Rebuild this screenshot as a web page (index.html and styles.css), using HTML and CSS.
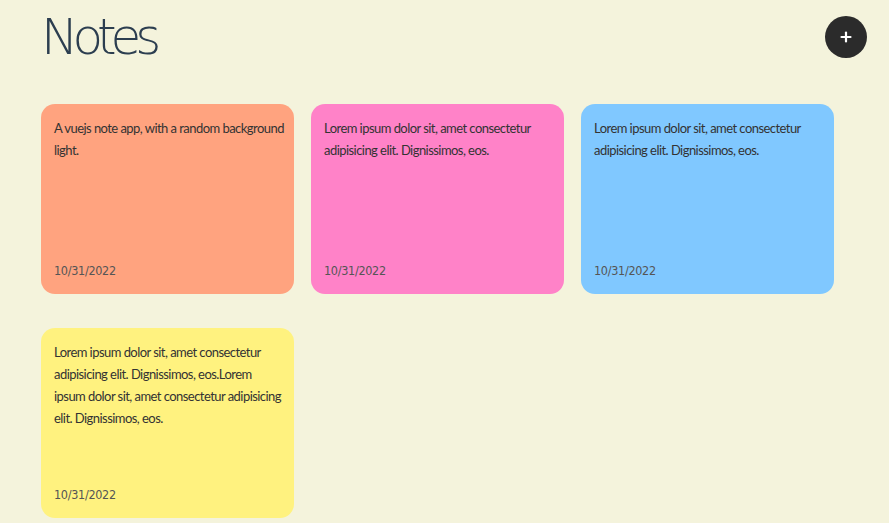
FILE: index.html
```html
<!DOCTYPE html>
<html lang="en">
<head>
    <meta charset="UTF-8">
    <meta name="viewport" content="width=device-width, initial-scale=1.0">
    <title>Notes</title>
    <link rel="stylesheet" href="styles.css">
</head>
<body>
    <div class="app">
        <header class="header">
            <h1>Notes</h1>
            <button class="add-btn" aria-label="Add note">
                <svg xmlns="http://www.w3.org/2000/svg" width="12" height="12" viewBox="0 0 12 12" fill="none" stroke="currentColor" stroke-width="2.2" stroke-linecap="round">
                    <line x1="6" y1="1.5" x2="6" y2="10.5"></line>
                    <line x1="1.5" y1="6" x2="10.5" y2="6"></line>
                </svg>
            </button>
        </header>

        <section class="notes">
            <div class="note note-orange">
                <p class="note-text">A vuejs note app, with a random background light.</p>
                <span class="note-date">10/31/2022</span>
            </div>
            <div class="note note-pink">
                <p class="note-text">Lorem ipsum dolor sit, amet consectetur adipisicing elit. Dignissimos, eos.</p>
                <span class="note-date">10/31/2022</span>
            </div>
            <div class="note note-blue">
                <p class="note-text">Lorem ipsum dolor sit, amet consectetur adipisicing elit. Dignissimos, eos.</p>
                <span class="note-date">10/31/2022</span>
            </div>
            <div class="note note-yellow">
                <p class="note-text">Lorem ipsum dolor sit, amet consectetur adipisicing elit. Dignissimos, eos.Lorem ipsum dolor sit, amet consectetur adipisicing elit. Dignissimos, eos.</p>
                <span class="note-date">10/31/2022</span>
            </div>
        </section>
    </div>
</body>
</html>
```

FILE: styles.css
```css
* {
    margin: 0;
    padding: 0;
    box-sizing: border-box;
}

body {
    background: #f4f3dc;
    color: #2c3e50;
    font-family: "Lato", "Roboto", sans-serif;
}

.app {
    padding: 0 22px 0 41px;
}

.header {
    display: flex;
    align-items: center;
    justify-content: space-between;
    height: 74px;
    margin-bottom: 30px;
}

.header h1 {
    font-family: "DejaVu Sans", sans-serif;
    font-weight: 200;
    font-size: 50px;
    color: #2c3e50;
    letter-spacing: -6px;
}

.add-btn {
    width: 42px;
    height: 42px;
    border-radius: 50%;
    border: none;
    background: #2b2b2b;
    color: #ffffff;
    display: flex;
    align-items: center;
    justify-content: center;
    cursor: pointer;
}

.notes {
    display: grid;
    grid-template-columns: repeat(3, 253px);
    column-gap: 17px;
    row-gap: 34px;
}

.note {
    height: 190px;
    border-radius: 14px;
    padding: 13px 9px 16px 13px;
    display: flex;
    flex-direction: column;
    justify-content: space-between;
}

.note-orange { background: #ffa37f; }
.note-pink { background: #ff82c8; }
.note-blue { background: #80c8ff; }
.note-yellow { background: #fff27f; }

.note-text {
    font-size: 13px;
    line-height: 22px;
    letter-spacing: -0.55px;
    color: #333333;
}

.note-date {
    font-family: "DejaVu Sans Condensed", "DejaVu Sans", sans-serif;
    font-stretch: condensed;
    font-size: 12.5px;
    letter-spacing: -0.3px;
    color: #555555;
}
```
